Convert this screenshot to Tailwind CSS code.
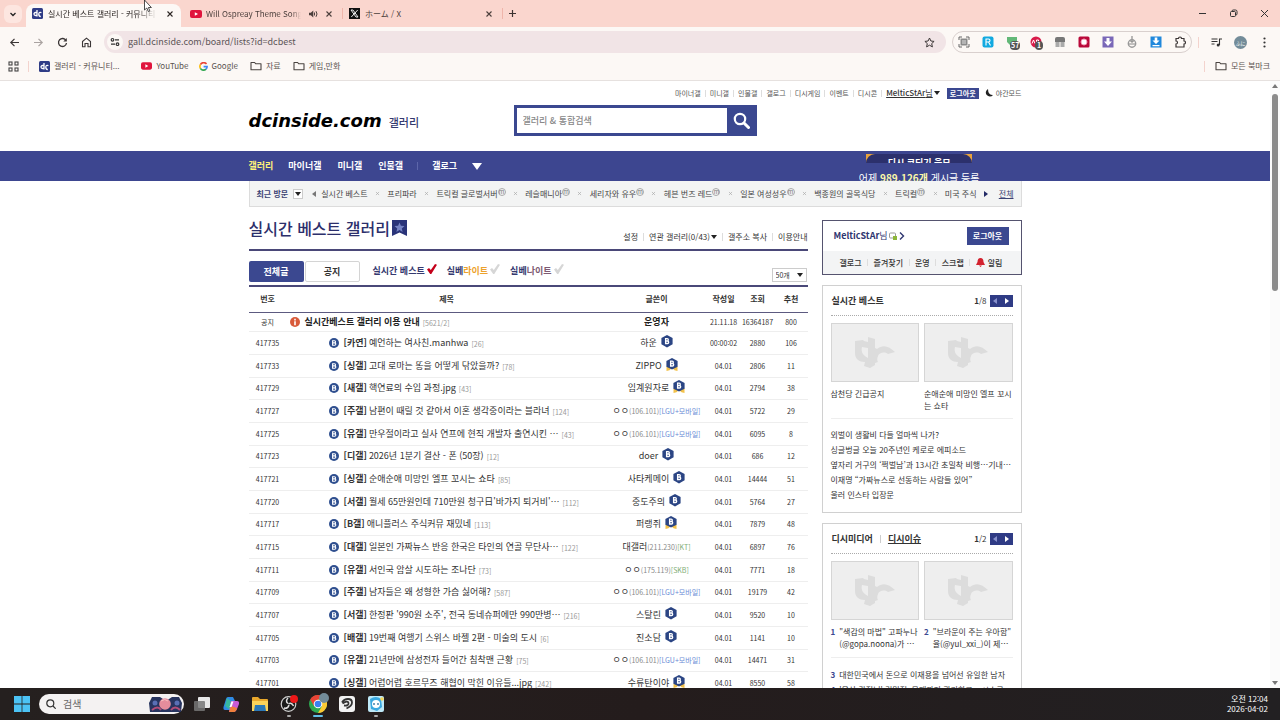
<!DOCTYPE html>
<html lang="ko">
<head>
  <meta charset="UTF-8" />
  <meta name="viewport" content="width=device-width, initial-scale=1.0" />
  <title>실시간 베스트 갤러리 - 커뮤니티 포털 디시인사이드</title>
  <script src="https://cdn.jsdelivr.net/npm/@tailwindcss/browser@4"></script>
</head>
<body class="h-screen flex flex-col overflow-hidden bg-white font-['Noto_Sans_CJK_KR','Noto_Sans',sans-serif] text-[#333] text-[8px] leading-[12px]">

  <!-- 공용 아이콘 -->
  <svg class="hidden" aria-hidden="true">
    <symbol id="dc" viewBox="0 0 11 11">
      <rect width="11" height="11" rx="1.5" fill="#2f3c86" />
      <path d="M5 2v6.5M5 4.500H3.600Q2 4.500 2 6t1.600 1.500H5M9.400 4.700Q7 3.700 6.800 6t2 2.600" fill="none" stroke="#fff" stroke-width="1.300" />
    </symbol>
    <symbol id="yt" viewBox="0 0 12 8">
      <rect width="12" height="8" rx="2" fill="#e0143c" />
      <path d="M4.8 2.2v3.6L8 4z" fill="#fff" />
    </symbol>
    <symbol id="x" viewBox="0 0 8 8"><path d="M1.5 1.5l5 5M6.5 1.5l-5 5" fill="none" stroke="currentColor" stroke-width="1.1" /></symbol>
    <symbol id="folder" viewBox="0 0 12 10"><path d="M1 1.5h3.6l1.2 1.3H11v6H1z" fill="none" stroke="#4a4441" stroke-width="1.1" stroke-linejoin="round" /></symbol>
    <symbol id="check" viewBox="0 0 10 10"><path d="M0 5.500L2 4l1.800 1.900L8 0l2 .8L4.300 10H3.200z" fill="currentColor" /></symbol>
    <symbol id="board" viewBox="0 0 10 10">
      <circle cx="5" cy="5" r="5" fill="#2f4f8f" />
      <path d="M3.600 2.700h1.900c1.400 0 1.400 2.200 0 2.200H3.600h2.100c1.500 0 1.500 2.400 0 2.400H3.600z" fill="none" stroke="#fff" stroke-width="1.100" />
    </symbol>
    <symbol id="hex" viewBox="0 0 12 13">
      <path d="M6 0l5.6 3.1v6.2L6 12.4.4 9.300V3.100z" fill="#2b4584" />
      <path d="M4.600 3.700h1.600c1.500 0 1.500 2.300 0 2.300H4.600h1.900c1.600 0 1.600 2.500 0 2.500H4.600z" fill="none" stroke="#fff" stroke-width="1.300" />
    </symbol>
    <symbol id="ribbon" viewBox="0 0 12 13">
      <path d="M.500 8.500V13l3-.8L6 10l2.500 2.200 3 .8V8.500z" fill="#f2c14a" />
      <path d="M6 0l5.600 2.900v5.800L6 11.600.4 8.700V2.900z" fill="#2b4584" />
      <path d="M4.600 3.200h1.600c1.500 0 1.500 2.300 0 2.300H4.600h1.900c1.600 0 1.600 2.500 0 2.500H4.600z" fill="none" stroke="#fff" stroke-width="1.300" />
    </symbol>
    <symbol id="noimg" viewBox="0 0 42 32">
      <path d="M1 4l8-1 1 1 4 1V0l7 2v9l2 1c6-5 12-3 18 3l-7 2c-4-3-9-1-10 2-1 2-1 5 0 6l-3 1v2l-5 3-6-2 1-4C5 25 1 22 1 16zM8 10c-1 4 0 8 6 11V11z" fill="#dcdcdc" />
    </symbol>
    <symbol id="chrome" viewBox="0 0 18 18">
      <circle cx="9" cy="9" r="9" fill="#2da94f" />
      <path d="M1.200 4.500A9 9 0 0 1 16.800 4.500H9L5.100 11.200z" fill="#ea4335" />
      <path d="M16.800 4.500A9 9 0 0 1 9 18l3.900-6.800L9 4.500z" fill="#fcc934" />
      <circle cx="9" cy="9" r="4.300" fill="#fff" /><circle cx="9" cy="9" r="3.300" fill="#3b82f0" />
    </symbol>
  </svg>

  <!-- 탭 -->
  <div class="h-[27px] shrink-0 bg-[#fad6ce] flex items-end text-[#4b3f3c]">
    <button class="w-[18px] h-[18px] ml-1 mb-1 mr-1 rounded-md bg-[#fde6e0] flex items-center justify-center" aria-label="탭 검색">
      <svg class="w-2 h-2" viewBox="0 0 8 8"><path d="M1.500 3L4 5.500 6.500 3" fill="none" stroke="#222" stroke-width="1.300" /></svg>
    </button>
    <div class="w-[155px] h-[23px] rounded-t-lg bg-[#fcf8f5] pl-[6px] pr-[7px] pb-1 flex items-center text-[#2b2523]">
      <svg class="w-[11px] h-[11px] shrink-0"><use href="#dc" /></svg>
      <span class="ml-[5px] flex-1 overflow-hidden whitespace-nowrap mask-r-from-80%">실시간 베스트 갤러리 - 커뮤니티</span>
      <button class="ml-2 w-2 h-2" aria-label="닫기"><svg class="w-2 h-2"><use href="#x" /></svg></button>
    </div>
    <div class="w-[161px] h-[23px] pl-[9px] pr-[9px] pb-1 flex items-center">
      <svg class="w-3 h-2 shrink-0"><use href="#yt" /></svg>
      <span class="ml-1 flex-1 overflow-hidden whitespace-nowrap mask-r-from-90%">Will Ospreay Theme Song</span>
      <svg class="ml-2 w-[9px] h-2 shrink-0" viewBox="0 0 9 8"><path d="M0 2.700h1.800L4.300.6v6.800L1.800 5.300H0z" fill="#4b3f3c" /><path d="M5.500 2.500v3M7 1.200q2 2.800 0 5.600" fill="none" stroke="#4b3f3c" /></svg>
      <button class="ml-[7px] w-2 h-2" aria-label="닫기"><svg class="w-2 h-2"><use href="#x" /></svg></button>
    </div>
    <div class="w-px h-[11px] mb-2 bg-[#efb5aa]"></div>
    <div class="w-[159px] h-[23px] pl-[6px] pr-[9px] pb-1 flex items-center">
      <svg class="w-[11px] h-[11px] shrink-0" viewBox="0 0 11 11"><rect width="11" height="11" fill="#111" /><path d="M2 2h2l5 7H7zM8.700 2L2.300 9" fill="none" stroke="#fff" stroke-width=".9" /></svg>
      <span class="ml-[5px] flex-1">ホーム / X</span>
      <button class="w-2 h-2" aria-label="닫기"><svg class="w-2 h-2"><use href="#x" /></svg></button>
    </div>
    <div class="w-px h-[11px] mb-2 bg-[#efb5aa]"></div>
    <button class="ml-[5px] mb-[9px] w-[9px] h-[9px]" aria-label="새 탭">
      <svg class="w-[9px] h-[9px]" viewBox="0 0 9 9"><path d="M4.500 1v7M1 4.500h7" stroke="#3b3230" stroke-width="1.200" /></svg>
    </button>
    <div class="ml-auto mr-[11px] mb-[9px] flex gap-[22px]">
      <button class="w-[9px] h-[9px]" aria-label="최소화"><svg class="w-[9px] h-[9px]" viewBox="0 0 9 9"><path d="M1 4.500h7" stroke="#333" /></svg></button>
      <button class="w-[9px] h-[9px]" aria-label="이전 크기로"><svg class="w-[9px] h-[9px]" viewBox="0 0 9 9"><g fill="none" stroke="#333"><rect x="1.500" y="2.500" width="5" height="5" rx="1" /><path d="M3 2.200Q3 1 4.200 1H6.500Q8 1 8 2.500v2.300Q8 6 7 6" /></g></svg></button>
      <button class="w-[9px] h-[9px]" aria-label="창 닫기"><svg class="w-[9px] h-[9px]" viewBox="0 0 9 9"><path d="M1 1l7 7M8 1L1 8" stroke="#333" /></svg></button>
    </div>
  </div>

  <!-- 주소창 -->
  <div class="h-[30px] shrink-0 bg-[#fcf8f5] flex items-center pl-[9px] pr-[14px]">
    <div class="flex gap-[13px]">
      <button class="w-[11px] h-[11px]" aria-label="뒤로"><svg class="w-[11px] h-[11px]" viewBox="0 0 11 11"><path d="M10 5.500H2M5.500 1.800L1.800 5.500l3.700 3.700" fill="none" stroke="#3b3636" stroke-width="1.200" /></svg></button>
      <button class="w-[11px] h-[11px]" aria-label="앞으로"><svg class="w-[11px] h-[11px]" viewBox="0 0 11 11"><path d="M1 5.500h8M5.500 1.800l3.700 3.700-3.700 3.700" fill="none" stroke="#aaa3a1" stroke-width="1.200" /></svg></button>
      <button class="w-[11px] h-[11px]" aria-label="새로고침"><svg class="w-[11px] h-[11px]" viewBox="0 0 11 11"><path d="M9 3.500A4 4 0 1 0 9.500 6" fill="none" stroke="#3b3636" stroke-width="1.300" /><path d="M9.800 1v3.500H6.300z" fill="#3b3636" /></svg></button>
      <button class="w-[11px] h-[11px]" aria-label="홈"><svg class="w-[11px] h-[11px]" viewBox="0 0 11 11"><path d="M1.500 4.500L5.500 1.200l4 3.300v5.300H7V6.500H4v3.300H1.500z" fill="none" stroke="#3b3636" stroke-width="1.100" /></svg></button>
    </div>
    <div class="ml-[12px] flex-1 h-[22px] rounded-full bg-[#f1e4e6] flex items-center pl-[3px] pr-[11px]">
      <span class="w-4 h-4 rounded-full bg-[#fcf8f5] flex items-center justify-center">
        <svg class="w-[10px] h-[10px]" viewBox="0 0 10 10"><g fill="none" stroke="#333" stroke-width="1.200"><circle cx="2.500" cy="2.800" r="1.300" /><path d="M5 2.800h4M1 7.200h4" /><circle cx="7.500" cy="7.200" r="1.300" /></g></svg>
      </span>
      <input class="ml-[5px] flex-1 bg-transparent text-[9px] text-[#5d5557] outline-none" type="text" aria-label="주소" value="gall.dcinside.com/board/lists?id=dcbest" />
      <button class="w-[11px] h-[11px]" aria-label="북마크 추가"><svg class="w-[11px] h-[11px]" viewBox="0 0 11 11"><path d="M5.500 1l1.400 3 3.200.4-2.400 2.200.7 3.300-2.900-1.700-2.900 1.700.7-3.300L.9 4.400 4.100 4z" fill="none" stroke="#3b3636" /></svg></button>
    </div>
    <!-- 확장 프로그램 -->
    <div class="ml-[6px] h-[22px] rounded-full border border-[#d9d0ce] flex items-center gap-3 pl-[5px] pr-[5px]">
      <svg class="w-3 h-3" viewBox="0 0 12 12"><rect x="2.500" y="2.500" width="7" height="7" fill="#8b8b8b" /><path d="M1 4V1h3M8 1h3v3M11 8v3H8M4 11H1V8" fill="none" stroke="#666" /><path d="M4 5h4M4 7h4" stroke="#ddd" /></svg>
      <svg class="w-3 h-3" viewBox="0 0 12 12"><rect x=".5" y=".5" width="11" height="11" rx="2" fill="#12a9e0" /><path d="M4 9.500V3h2.500c2 0 2 3 0 3H4M6.500 6L8.500 9.500" fill="none" stroke="#fff" stroke-width="1.100" /></svg>
      <span class="relative w-3 h-3">
        <svg class="w-3 h-3" viewBox="0 0 12 12"><path d="M1 1h10v5L6 11 1 6z" fill="#63b878" /></svg>
        <span class="absolute left-1 top-[5px] px-[1px] rounded-sm bg-[#555] text-white font-bold text-[7px] leading-[9px]">57</span>
      </span>
      <span class="relative w-3 h-3">
        <svg class="w-3 h-3" viewBox="0 0 12 12"><circle cx="6" cy="6" r="5.500" fill="#d81b4a" /><path d="M2 7.500L3.500 4 5 7.500M6.500 4v3.500h2V4z" fill="none" stroke="#fff" /></svg>
        <span class="absolute left-[5px] top-[5px] px-[2px] rounded-sm bg-[#555] text-white font-bold text-[7px] leading-[9px]">1</span>
      </span>
      <svg class="w-3 h-3" viewBox="0 0 12 12"><path d="M1 3q0-2 2-2h6q2 0 2 2v3H1z" fill="#777" /><rect x="1.500" y="6" width="4" height="5" fill="#aaa" /><rect x="6.500" y="6" width="4" height="5" fill="#aaa" /></svg>
      <svg class="w-3 h-3" viewBox="0 0 12 12"><rect x=".5" y=".5" width="11" height="11" rx="1.500" fill="#b9093a" /><circle cx="6" cy="6" r="3" fill="#fff" stroke="#f39ab2" /></svg>
      <svg class="w-3 h-3" viewBox="0 0 12 12"><rect x=".5" y=".5" width="11" height="11" fill="#7a68b8" /><path d="M4.500 2h3v3.500H10L6 10 2 5.500h2.500z" fill="#fff" /></svg>
      <svg class="w-3 h-3" viewBox="0 0 12 12"><path d="M6 0v6M4 4.500l2 2 2-2" fill="none" stroke="#777" /><circle cx="6" cy="7.500" r="3.700" fill="none" stroke="#999" stroke-width="1.400" /><path d="M3 8h6" stroke="#888" /></svg>
      <svg class="w-3 h-3" viewBox="0 0 12 12"><rect x=".5" y=".5" width="11" height="11" fill="#2088dc" /><path d="M4.700 1.500h2.600v3H9.500L6 8 2.500 4.500h2.200zM2.500 9h7v1.300h-7z" fill="#fff" /></svg>
      <svg class="w-3 h-3" viewBox="0 0 12 12"><path d="M2 2.500h2.500Q4.500 1 6 1t1.500 1.500H10V5q1.500 0 1.500 1.500T10 8v3H2V8q1.500 0 1.500-1.500T2 5z" fill="none" stroke="#3b3636" stroke-width="1.200" /></svg>
    </div>
    <div class="ml-[6px] w-px h-[11px] bg-[#f3d3cd]"></div>
    <svg class="ml-3 w-[11px] h-[11px]" viewBox="0 0 11 11"><path d="M.5 2h6M.5 4.500h6M.5 7h3M8.500 8V2h2.500" fill="none" stroke="#333" stroke-width="1.100" /><circle cx="7.200" cy="8" r="1.500" fill="#333" /></svg>
    <span class="ml-3 w-[13px] h-[13px] rounded-full bg-[#738c99] text-white text-[5px] leading-[13px] text-center">ふに</span>
    <button class="ml-4 w-[3px] h-[11px]" aria-label="메뉴"><svg class="w-[3px] h-[11px]" viewBox="0 0 3 11" fill="#333"><circle cx="1.500" cy="1.500" r="1.100" /><circle cx="1.500" cy="5.500" r="1.100" /><circle cx="1.500" cy="9.500" r="1.100" /></svg></button>
  </div>

  <!-- 북마크바 -->
  <div class="h-6 shrink-0 bg-[#fcf8f5] border-b border-[#e6e1df] flex items-center pl-2 pr-[10px] pb-[5px] text-[#5b5350]">
    <svg class="w-[11px] h-[11px]" viewBox="0 0 11 11"><g fill="none" stroke="#444" stroke-width="1.100"><rect x="1" y="1" width="3" height="3" /><rect x="7" y="1" width="3" height="3" /><rect x="1" y="7" width="3" height="3" /><rect x="7" y="7" width="3" height="3" /></g></svg>
    <div class="ml-[9px] w-px h-[11px] bg-[#f3d3cd]"></div>
    <a href="#" class="ml-[10px] flex items-center gap-1"><svg class="w-[11px] h-[11px]"><use href="#dc" /></svg>갤러리 - 커뮤니티...</a>
    <a href="#" class="ml-[22px] flex items-center gap-1"><svg class="w-[11px] h-2"><use href="#yt" /></svg>YouTube</a>
    <a href="#" class="ml-[10px] flex items-center gap-1">
      <svg class="w-[9px] h-[9px]" viewBox="0 0 9 9" fill="none" stroke-width="1.600"><path d="M7.500 2A3.600 3.600 0 0 0 1.400 2.700" stroke="#ea4335" /><path d="M1.400 2.700a3.600 3.600 0 0 0 0 3.600" stroke="#fbbc05" /><path d="M1.400 6.300A3.600 3.600 0 0 0 7 7.200" stroke="#34a853" /><path d="M7 7.200Q8.200 6 8.100 4.600H4.600" stroke="#4285f4" /></svg>Google</a>
    <a href="#" class="ml-3 flex items-center gap-1"><svg class="w-3 h-[10px]"><use href="#folder" /></svg>자료</a>
    <a href="#" class="ml-3 flex items-center gap-1"><svg class="w-3 h-[10px]"><use href="#folder" /></svg>게임,만화</a>
    <div class="ml-auto w-px h-[11px] bg-[#f3d3cd]"></div>
    <a href="#" class="ml-[10px] flex items-center gap-1"><svg class="w-3 h-[10px]"><use href="#folder" /></svg>모든 북마크</a>
  </div>

  <!-- 페이지 -->
  <div class="flex-1 min-h-0 flex">
    <div class="flex-1 min-w-0 overflow-hidden">

      <header class="w-full max-w-[773px] mx-auto pt-[6px] pb-[15px]">
        <div class="h-3 flex items-center justify-end text-[7px] text-[#555]">
          <a href="#">마이너갤</a><i class="w-px h-[7px] mx-1 bg-[#ddd]"></i>
          <a href="#">미니갤</a><i class="w-px h-[7px] mx-1 bg-[#ddd]"></i>
          <a href="#">인물갤</a><i class="w-px h-[7px] mx-1 bg-[#ddd]"></i>
          <a href="#">갤로그</a><i class="w-px h-[7px] mx-1 bg-[#ddd]"></i>
          <a href="#">디시게임</a><i class="w-px h-[7px] mx-1 bg-[#ddd]"></i>
          <a href="#">이벤트</a><i class="w-px h-[7px] mx-1 bg-[#ddd]"></i>
          <a href="#">디시콘</a><i class="w-px h-[7px] mx-1 bg-[#ddd]"></i>
          <a href="#" class="text-[8px] underline underline-offset-1 text-[#333]"><span class="font-medium">MelticStAr</span>님</a>
          <svg class="ml-[1px] w-[6px] h-1" viewBox="0 0 6 4"><path d="M0 0h6L3 4z" fill="#222" /></svg>
          <button class="ml-[7px] w-8 h-[11px] bg-[#3b4890] text-white font-bold leading-[11px]">로그아웃</button>
          <svg class="ml-[6px] w-2 h-2" viewBox="0 0 8 8"><path d="M3 0A4 4 0 1 0 8 6Q3 6 3 0z" fill="#222" /></svg>
          <a href="#" class="ml-[3px]">야간모드</a>
        </div>
        <div class="mt-[6px] h-[31px] flex items-center">
          <h1 class="w-[265px] flex items-baseline gap-[7px]">
            <a href="#" class="font-['DejaVu_Sans',sans-serif] font-bold italic text-[18px] leading-5 text-black">dcinside.com</a>
            <a href="#" class="text-[11px] font-medium text-[#33396f]">갤러리</a>
          </h1>
          <form class="w-[243px] h-[31px] flex bg-[#3b4890] p-[3px] pr-0">
            <input type="text" aria-label="검색어" placeholder="갤러리 &amp; 통합검색" class="flex-1 min-w-0 bg-white px-[6px] text-[9px] font-medium outline-none placeholder:text-[#888] placeholder:opacity-100" />
            <button type="button" class="w-[30px] flex items-center justify-center" aria-label="검색">
              <svg class="w-[17px] h-[17px]" viewBox="0 0 17 17"><circle cx="7" cy="7" r="5.200" fill="none" stroke="#fff" stroke-width="2.200" /><path d="M11 11l4.500 4.500" stroke="#fff" stroke-width="3" stroke-linecap="round" /></svg>
            </button>
          </form>
        </div>
      </header>

      <nav class="bg-[#3d4690] text-white">
        <div class="w-full max-w-[773px] mx-auto h-[30px] flex items-center font-bold text-[9px]">
          <a href="#" class="text-[#fff27a] mr-[15px]">갤러리</a>
          <a href="#" class="mr-4">마이너갤</a>
          <a href="#" class="mr-4">미니갤</a>
          <a href="#">인물갤</a>
          <i class="w-px h-2 mx-[14px] bg-[#5d66aa]"></i>
          <a href="#">갤로그</a>
          <svg class="ml-[15px] w-[10px] h-[7px]" viewBox="0 0 10 7"><path d="M0 0h10L5 7z" fill="#fff" /></svg>
          <div class="ml-auto mr-[42px] h-[30px] pt-[3px] overflow-hidden flex flex-col items-center">
            <div class="w-[106px] h-[9px] shrink-0 overflow-hidden bg-[#e8a23c]">
              <div class="h-4 rounded-t-[9px] bg-[#2c306c] text-center text-[9px] leading-[14px] pt-[2px]">디시 코딩기 응모</div>
            </div>
            <p class="mt-2 text-[10px] leading-[14px] font-normal whitespace-nowrap">어제 <b class="text-[#fbf8a8]">989,126개</b> 게시글 등록</p>
          </div>
        </div>
      </nav>

      <div class="w-full max-w-[773px] mx-auto h-[26px] bg-[#f3f4f4] border border-t-0 border-[#dcdcdc] flex items-center px-[7px] text-[8px] text-[#444]">
        <b class="text-[#3b4375]">최근 방문</b>
        <button class="ml-[5px] w-[10px] h-[10px] bg-white border border-[#ccc] flex items-center justify-center" aria-label="펼치기"><svg class="w-[6px] h-1" viewBox="0 0 6 4"><path d="M0 0h6L3 4z" fill="#222" /></svg></button>
        <svg class="ml-[9px] w-1 h-[6px]" viewBox="0 0 4 6"><path d="M4 0v6L0 3z" fill="#777" /></svg>
        <div id="recent" class="ml-[5px] flex-1 flex items-center justify-between whitespace-nowrap"></div>
        <svg class="ml-[7px] w-1 h-[6px]" viewBox="0 0 4 6"><path d="M0 0v6l4-3z" fill="#222a66" /></svg>
        <a href="#" class="ml-[11px] underline underline-offset-1 text-[#3b4375]">전체</a>
      </div>

      <div class="w-full max-w-[773px] mx-auto flex gap-[14px]">
        <!-- 글 목록 -->
        <main class="flex-1 min-w-0">
          <div class="h-11 border-b-2 border-[#4a4878] flex items-center justify-between">
            <h2 class="flex items-center gap-[2px] text-[16px] leading-5 font-medium text-[#2c2f6b]">실시간 베스트 갤러리
              <svg class="w-[15px] h-4" viewBox="0 0 15 16"><path d="M0 0h15v16l-7.500-3.500L0 16z" fill="#2a3479" /><path d="M7.500 2.500l1.400 3.300 3.600.3-2.700 2.300.8 3.500-3.100-1.900-3.100 1.900.8-3.500L2.500 6.100l3.600-.3z" fill="#7583c4" /></svg>
            </h2>
            <div class="flex items-center pt-[17px] text-[8px]">
              <button>설정</button><i class="w-px h-2 mx-[5px] bg-[#ddd]"></i>
              <button class="flex items-center gap-[1px]">연관 갤러리(0/43)<svg class="w-[6px] h-1" viewBox="0 0 6 4"><path d="M0 0h6L3 4z" fill="#222" /></svg></button><i class="w-px h-2 mx-[5px] bg-[#ddd]"></i>
              <button>갤주소 복사</button><i class="w-px h-2 mx-[5px] bg-[#ddd]"></i>
              <button>이용안내</button>
            </div>
          </div>

          <div class="h-9 pt-[10px] border-b-2 border-[#4a4878] flex items-start font-bold text-[9px]">
            <button class="w-[55px] h-[21px] rounded-xs bg-[#3b4890] text-white">전체글</button>
            <button class="ml-[1px] w-[55px] h-[21px] rounded-xs border border-[#d4d4d4]">공지</button>
            <div class="ml-[13px] h-5 flex items-center gap-[10px] text-[#35396f]">
              <a href="#" class="flex items-center gap-[2px]">실시간 베스트<svg class="w-[10px] h-[10px] mb-1 text-[#c4001a]"><use href="#check" /></svg></a>
              <a href="#" class="flex items-center gap-[2px]"><span>실베<span class="text-[#eda22c]">라이트</span></span><svg class="w-[10px] h-[10px] mb-1 text-[#d6d6d6]"><use href="#check" /></svg></a>
              <a href="#" class="flex items-center gap-[2px]"><span>실베<span class="text-[#7d5a72]">나이트</span></span><svg class="w-[10px] h-[10px] mb-1 text-[#d6d6d6]"><use href="#check" /></svg></a>
            </div>
            <div class="relative ml-auto mt-[7px] mr-[1px]">
              <select class="appearance-none block w-[35px] h-[14px] border border-[#ccc] bg-white pl-[3px] text-[7px] leading-3 font-normal" aria-label="목록 개수"><option>50개</option><option>100개</option></select>
              <svg class="absolute right-1 top-[5px] w-[6px] h-1 pointer-events-none" viewBox="0 0 6 4"><path d="M0 0h6L3 4z" fill="#222" /></svg>
            </div>
          </div>

          <table class="w-full table-fixed text-center text-[7px]">
            <colgroup><col class="w-[38px]" /><col /><col class="w-[100px]" /><col class="w-[34px]" /><col class="w-[34px]" /><col class="w-[33px]" /></colgroup>
            <thead>
              <tr class="h-[25px] border-b border-[#5c5a80] text-[8px]">
                <th>번호</th><th>제목</th><th>글쓴이</th><th>작성일</th><th>조회</th><th>추천</th>
              </tr>
            </thead>
            <tbody>
              <tr class="h-[19px] border-b border-[#eee]">
                <td>공지</td>
                <td>
                  <a href="#" class="flex items-center pl-[3px] text-[9px]">
                    <svg class="w-[10px] h-[10px] mr-[5px]" viewBox="0 0 10 10"><circle cx="5" cy="5" r="5" fill="#d85a3a" /><path d="M5 1.800v1.600M5 4.300v4" stroke="#fff" stroke-width="1.600" /></svg>
                    <b class="text-[#222]">실시간베스트 갤러리 이용 안내</b>
                    <span class="pt-[2px] ml-[3px] text-[7px] text-[#999]">[5621/2]</span>
                  </a>
                </td>
                <td class="text-[9px] font-bold text-[#222]">운영자</td>
                <td>21.11.18</td><td>16364187</td><td>800</td>
              </tr>
            </tbody>
            <tbody id="list"></tbody>
          </table>
        </main>

        <!-- 오른쪽 -->
        <aside class="w-[200px] shrink-0 pt-[13px]">
          <section class="border border-[#55536f]">
            <div class="h-[30px] pl-[11px] pr-3 flex items-center text-[#2f3670]">
              <a href="#" class="text-[9px]"><b>MelticStAr</b>님</a>
              <svg class="ml-[1px] w-2 h-2" viewBox="0 0 8 8"><rect x=".5" y="1" width="6" height="5" rx="1" fill="#fff" stroke="#999" /><rect x="4" y="4" width="4" height="4" fill="#8db63a" /></svg>
              <svg class="ml-[2px] w-[6px] h-2" viewBox="0 0 6 8"><path d="M1 .5L4.500 4 1 7.500" fill="none" stroke="#2f3670" stroke-width="1.400" /></svg>
              <button class="ml-auto w-[42px] h-[18px] bg-[#3b4890] text-white font-bold">로그아웃</button>
            </div>
            <div class="h-[23px] bg-[#f3f4f5] pl-[17px] pr-[18px] flex items-center justify-between font-medium">
              <a href="#">갤로그</a><i class="w-px h-[7px] bg-[#ddd]"></i>
              <a href="#">즐겨찾기</a><i class="w-px h-[7px] bg-[#ddd]"></i>
              <a href="#">운영</a><i class="w-px h-[7px] bg-[#ddd]"></i>
              <a href="#">스크랩</a><i class="w-px h-[7px] bg-[#ddd]"></i>
              <a href="#" class="flex items-center gap-[3px]"><svg class="w-[9px] h-[9px]" viewBox="0 0 9 9"><path d="M4.500 0q3 0 3 4L9 7H0l1.500-3q0-4 3-4zM3 7.500h3L4.500 9z" fill="#d3222f" /></svg>알림</a>
            </div>
          </section>

          <section class="mt-[10px] h-[228px] border border-[#d0d0d0] px-2">
            <div class="h-[30px] flex items-center border-b border-dotted border-[#aaa]">
              <h3 class="pl-[1px] text-[9px] font-bold">실시간 베스트</h3>
              <span class="ml-auto mr-[3px]"><b>1</b>/8</span>
              <button class="w-[11px] h-3 bg-[#2f3b85] flex items-center justify-center" aria-label="이전"><svg class="w-1 h-[6px]" viewBox="0 0 4 6"><path d="M4 0v6L0 3z" fill="#8790cc" /></svg></button>
              <button class="w-3 h-3 bg-[#2f3b85] flex items-center justify-center" aria-label="다음"><svg class="w-1 h-[6px]" viewBox="0 0 4 6"><path d="M0 0v6l4-3z" fill="#fff" /></svg></button>
            </div>
            <div class="mt-[7px] grid grid-cols-2 gap-[5px]">
              <a href="#"><span class="h-[59px] mb-[6px] bg-[#eee] border border-[#d5d5d5] flex items-center justify-center"><svg class="w-[42px] h-8"><use href="#noimg" /></svg></span>삼천당 긴급공지</a>
              <a href="#"><span class="h-[59px] mb-[6px] bg-[#eee] border border-[#d5d5d5] flex items-center justify-center"><svg class="w-[42px] h-8"><use href="#noimg" /></svg></span>순애순애 미망인 엘프 꼬시는 쇼타</a>
            </div>
            <ul class="mt-[6px] pt-2 border-t border-[#eee] leading-[15px] whitespace-nowrap">
              <li><a href="#">외벌이 생활비 다들 얼마씩 나가?</a></li>
              <li><a href="#">싱글벙글 오늘 20주년인 케로로 에피소드</a></li>
              <li><a href="#">옆자리 거구의 ‘쩍벌남’과 13시간 초밀착 비행⋯기내⋯</a></li>
              <li><a href="#">이재명 “가짜뉴스로 선동하는 사람들 있어”</a></li>
              <li><a href="#">울러 인스타 입장문</a></li>
            </ul>
          </section>

          <section class="mt-[10px] h-[228px] border border-[#d0d0d0] px-2">
            <div class="h-[30px] flex items-center border-b border-dotted border-[#aaa]">
              <h3 class="pl-[1px] text-[9px] font-bold flex items-center">디시미디어<i class="w-px h-2 mx-[7px] bg-[#ccc]"></i><a href="#" class="underline underline-offset-1">디시이슈</a></h3>
              <span class="ml-auto mr-[3px]"><b>1</b>/2</span>
              <button class="w-[11px] h-3 bg-[#2f3b85] flex items-center justify-center" aria-label="이전"><svg class="w-1 h-[6px]" viewBox="0 0 4 6"><path d="M4 0v6L0 3z" fill="#8790cc" /></svg></button>
              <button class="w-3 h-3 bg-[#2f3b85] flex items-center justify-center" aria-label="다음"><svg class="w-1 h-[6px]" viewBox="0 0 4 6"><path d="M0 0v6l4-3z" fill="#fff" /></svg></button>
            </div>
            <div class="mt-[7px] grid grid-cols-2 gap-[5px]">
              <a href="#"><span class="h-[59px] mb-[6px] bg-[#eee] border border-[#d5d5d5] flex items-center justify-center"><svg class="w-[42px] h-8"><use href="#noimg" /></svg></span><span class="flex gap-1 whitespace-nowrap"><b class="text-[#3b4890]">1</b><span>"색감의 마법" 고파누나<br />(@gopa.noona)가 ⋯</span></span></a>
              <a href="#"><span class="h-[59px] mb-[6px] bg-[#eee] border border-[#d5d5d5] flex items-center justify-center"><svg class="w-[42px] h-8"><use href="#noimg" /></svg></span><span class="flex gap-1 whitespace-nowrap"><b class="text-[#3b4890]">2</b><span>"브라운이 주는 우아함"<br />율(@yul_xxi_)이 제⋯</span></span></a>
            </div>
            <ul class="mt-[7px] pt-[9px] border-t border-[#eee] leading-[15px] whitespace-nowrap">
              <li><a href="#"><b class="text-[#3b4890] mr-1">3</b>대한민국에서 돈으로 이재용을 넘어선 유일한 남자</a></li>
              <li><a href="#"><b class="text-[#3b4890] mr-1">4</b>'음상 강점님' 김민정, 몸매까지 관리하고... 시스루</a></li>
            </ul>
          </section>
        </aside>
      </div>
    </div>

    <!-- 스크롤바 -->
    <div class="w-[10px] shrink-0 bg-[#fbfbfb] flex flex-col items-center py-[3px]">
      <svg class="w-[6px] h-1" viewBox="0 0 6 4"><path d="M3 0l3 4H0z" fill="#777" /></svg>
      <div class="mt-[6px] w-[6px] h-[197px] rounded-full bg-[#8b8b8b]"></div>
      <svg class="mt-auto w-[6px] h-1" viewBox="0 0 6 4"><path d="M0 0h6L3 4z" fill="#777" /></svg>
    </div>
  </div>

  <!-- 작업 표시줄 -->
  <footer class="h-8 shrink-0 bg-linear-to-r from-[#25201f] via-[#241c1c] to-[#222022] flex items-center pl-[14px] pr-3 text-white">
    <button class="w-4 h-4" aria-label="시작"><svg class="w-4 h-4" viewBox="0 0 16 16" fill="#4cc3f5"><path d="M0 0h7.600v7.600H0zM8.400 0H16v7.600H8.400zM0 8.400h7.600V16H0zM8.400 8.400H16V16H8.400z" /></svg></button>
    <label class="ml-[9px] w-[145px] h-5 rounded-full bg-[#f4f2f2] flex items-center pl-[7px] pr-[1px]">
      <svg class="w-[10px] h-[10px]" viewBox="0 0 10 10"><circle cx="4.300" cy="4.300" r="3.500" fill="none" stroke="#333" stroke-width="1.200" /><path d="M7 7l2.700 2.700" stroke="#333" stroke-width="1.200" /></svg>
      <input type="text" placeholder="검색" aria-label="검색" class="ml-[7px] flex-1 min-w-0 text-[10px] outline-none placeholder:text-[#666] placeholder:opacity-100" />
      <svg class="w-[34px] h-4" viewBox="0 0 34 16"><path d="M3 1h8l6 4 6-4h7l3 6-1 9H1L0 7z" fill="#27345f" /><circle cx="6" cy="7" r="2.500" fill="#5a6fb5" /><circle cx="28" cy="7" r="2.500" fill="#5a6fb5" /><path d="M3 14q6-5 9 0M22 14q4-5 9 0" stroke="#b24d78" stroke-width="2" fill="none" /><circle cx="16" cy="8" r="5.800" fill="#e58d9c" /><path d="M12 5q4-3 7 0" stroke="#f8c0c0" fill="none" /></svg>
    </label>
    <div class="ml-[9px] flex items-center gap-[11px]">
      <svg class="w-[18px] h-[18px]" viewBox="0 0 18 18"><rect x="5" y="2" width="12" height="11" rx="1" fill="#e8e8e8" /><rect x="1" y="6" width="11" height="10" rx="1" fill="#777" fill-opacity=".85" /></svg>
      <svg class="w-[18px] h-[18px]" viewBox="0 0 18 18"><path d="M6 2h5l2 4-3 9H3Q1 15 1.500 12L4 4q.5-2 2-2z" fill="#2f8be6" /><path d="M5 3L3 11l5 4 2-8z" fill="#37b9a0" /><path d="M9 6h6q2.500 0 2 3l-2 5q-1 3-3 3H7z" fill="#c95bd6" /><path d="M7 17l2-6 6 2q-1 4-3 4z" fill="#f0803c" /><path d="M9.500 6.500L7.500 12h2l2-5.500z" fill="#fff" /></svg>
      <svg class="w-[18px] h-[18px]" viewBox="0 0 18 18"><path d="M1 3q0-1 1-1h5l2 2h7q1 0 1 1v10H1z" fill="#e9a82c" /><path d="M1 6h16v10H1z" fill="#fbd35a" /><path d="M4 10h10l1 6H3z" fill="#2a78b8" /></svg>
      <span class="relative w-[18px] h-[18px]">
        <svg class="w-[18px] h-[18px]" viewBox="0 0 18 18"><circle cx="8.500" cy="9" r="7.300" fill="#1a1a1a" stroke="#d0d0d0" stroke-width="1.200" /><path d="M8 3q-3 3 0 5.500M13.500 11Q11.500 7 8.500 9M4 13q4 1 5-3" fill="none" stroke="#ddd" stroke-width="1.500" /><circle cx="14" cy="4" r="4" fill="#f01818" /></svg>
        <span class="absolute left-[7px] -bottom-[4px] w-1 h-[2px] rounded-full bg-[#aaa]"></span>
      </span>
      <span class="relative w-[18px] h-[18px]">
        <svg class="w-[18px] h-[18px]"><use href="#chrome" /></svg>
        <span class="absolute -right-[2px] -top-[2px] w-[10px] h-[10px] rounded-full bg-[#738c99]"></span>
        <span class="absolute left-1 -bottom-[4px] w-[10px] h-[2px] rounded-full bg-[#62bfe8]"></span>
      </span>
      <svg class="w-[18px] h-[18px]" viewBox="0 0 18 18"><rect x="1" y="1" width="16" height="16" rx="3" fill="#f2f2f2" /><path d="M4 7.500Q6 4 10 4t4 3.500Q14 11 8.500 13.500M4.500 8.500Q10 5 10.500 8T6 10.500" fill="none" stroke="#333" stroke-width="1.800" /></svg>
      <span class="relative w-[18px] h-[18px]">
        <svg class="w-[18px] h-[18px]" viewBox="0 0 18 18"><rect x="1" y="1" width="16" height="16" rx="2" fill="#bfe9f8" /><path d="M3 4q6-4 11 0l1 8-5 4-6-2z" fill="#3aa8e0" /><circle cx="9" cy="9" r="4" fill="#fff" /><path d="M7 8v2M11 8v2" stroke="#2a6fa0" stroke-width="1.300" /><circle cx="15" cy="4" r="1.800" fill="#f5d658" /></svg>
        <span class="absolute left-[7px] -bottom-[4px] w-1 h-[2px] rounded-full bg-[#aaa]"></span>
      </span>
    </div>
    <div class="ml-auto text-right leading-[10px]">오전 12:04<br />2026-04-02</div>
  </footer>

  <!-- 마우스 커서 -->
  <svg class="absolute left-[144px] top-0 w-2 h-3 pointer-events-none" viewBox="0 0 8 12"><path d="M.5 0v10l2.300-2 1.500 3.500 1.500-.7L4.400 7.500h3z" fill="#fff" stroke="#222" stroke-width=".8" /></svg>

  <script>
    // 최근 방문 갤러리 [이름, 마이너 여부]
    const recent = [
      ["실시간 베스트", 0], ["프리파라", 0], ["트릭컬 글로벌서버", 1], ["레슬매니아", 1], ["세리자와 유우", 1],
      ["헤븐 번즈 레드", 1], ["일본 여성성우", 1], ["백종원의 골목식당", 0], ["트릭컬", 1], ["미국 주식", 0],
    ];

    // 번호, 말머리, 제목, 댓글수, 글쓴이, 아이콘 또는 IP, 통신사, 작성일, 조회, 추천
    const posts = [
      [417735, "카연", "예언하는 여사친.manhwa", 26, "하운", "hex", "", "00:00:02", 2880, 106],
      [417733, "싱갤", "고대 로마는 똥을 어떻게 닦았을까?", 78, "ZIPPO", "ribbon", "", "04.01", 2806, 11],
      [417729, "새갤", "핵연료의 수입 과정.jpg", 43, "임계원자로", "ribbon", "", "04.01", 2794, 38],
      [417727, "주갤", "남편이 때릴 것 같아서 이혼 생각중이라는 블라녀", 124, "ㅇㅇ", "106.101", "LGU+모바일", "04.01", 5722, 29],
      [417725, "유갤", "만우절이라고 실사 연프에 현직 개발자 출연시킨 ⋯", 43, "ㅇㅇ", "106.101", "LGU+모바일", "04.01", 6095, 8],
      [417723, "디갤", "2026년 1분기 결산 - 폰 (50장)", 12, "doer", "hex", "", "04.01", 686, 12],
      [417721, "싱갤", "순애순애 미망인 엘프 꼬시는 쇼타", 85, "사타케메이", "hex", "", "04.01", 14444, 51],
      [417720, "서갤", "월세 65만원인데 710만원 청구日'바가지 퇴거비'⋯", 112, "중도주의", "hex", "", "04.01", 5764, 27],
      [417717, "B갤", "애니플러스 주식커뮤 재밌네", 113, "퍼랭쥐", "ribbon", "", "04.01", 7879, 48],
      [417715, "대갤", "일본인 가짜뉴스 반응 한국은 타인의 연골 무단사⋯", 122, "대갤러", "211.230", "KT", "04.01", 6897, 76],
      [417711, "유갤", "서인국 암살 시도하는 조나단", 73, "ㅇㅇ", "175.119", "SKB", "04.01", 7771, 18],
      [417709, "주갤", "남자들은 왜 성형한 가슴 싫어해?", 587, "ㅇㅇ", "106.101", "LGU+모바일", "04.01", 19179, 42],
      [417707, "서갤", "한정판 '990원 소주', 전국 동네슈퍼에만 990만병⋯", 216, "스탈린", "hex", "", "04.01", 9520, 10],
      [417705, "배갤", "19번째 여행기 스위스 바젤 2편 - 미술의 도시", 6, "진소담", "hex", "", "04.01", 1141, 10],
      [417703, "유갤", "21년만에 삼성전자 들어간 침착맨 근황", 75, "ㅇㅇ", "106.101", "LGU+모바일", "04.01", 14471, 31],
      [417701, "싱갤", "어렵어렵 호르무즈 해협이 막힌 이유들...jpg", 242, "수류탄이야", "ribbon", "", "04.01", 8550, 58],
    ];

    document.getElementById("recent").innerHTML = recent.map(([name, minor], i) => `
      <a href="#" class="flex items-center">${name}${minor ? '<span class="w-2 h-2 mb-1 rounded-full border border-[#aaa] text-[6px] leading-[5px] text-center text-[#777]">m</span>' : ""}</a>
      ${i < recent.length - 1 ? '<svg class="w-[5px] h-[5px] text-[#aaa]"><use href="#x" /></svg>' : ""}`).join("");

    function writer(name, mark, isp) {
      if (!isp) return `${name}<svg class="w-3 h-[13px] mb-[3px] ml-1"><use href="#${mark}" /></svg>`;
      const color = isp.startsWith("LGU") ? "text-[#6a8cd6]" : "text-[#7fae76]";
      return `${name}<span class="text-[7px] text-[#888]">(${mark})</span><span class="text-[7px] ${color}">[${isp}]</span>`;
    }

    document.getElementById("list").innerHTML = posts.map(([no, head, title, reply, name, mark, isp, date, view, rec]) => `
      <tr class="h-[23px] [&:nth-child(3n)]:h-[22px] border-b border-[#eee]">
        <td>${no}</td>
        <td>
          <a href="#" class="flex items-center pl-[42px] text-[9px] whitespace-nowrap">
            <svg class="w-[10px] h-[10px] mr-[5px] shrink-0"><use href="#board" /></svg>
            <b class="mr-[2px]">[${head}]</b>${title}
            <span class="pt-[2px] ml-[3px] text-[7px] text-[#999]">[${reply}]</span>
          </a>
        </td>
        <td><div class="h-4 flex items-center justify-center text-[9px] whitespace-nowrap">${writer(name, mark, isp)}</div></td>
        <td>${date}</td><td>${view}</td><td>${rec}</td>
      </tr>`).join("");
  </script>
</body>
</html>
